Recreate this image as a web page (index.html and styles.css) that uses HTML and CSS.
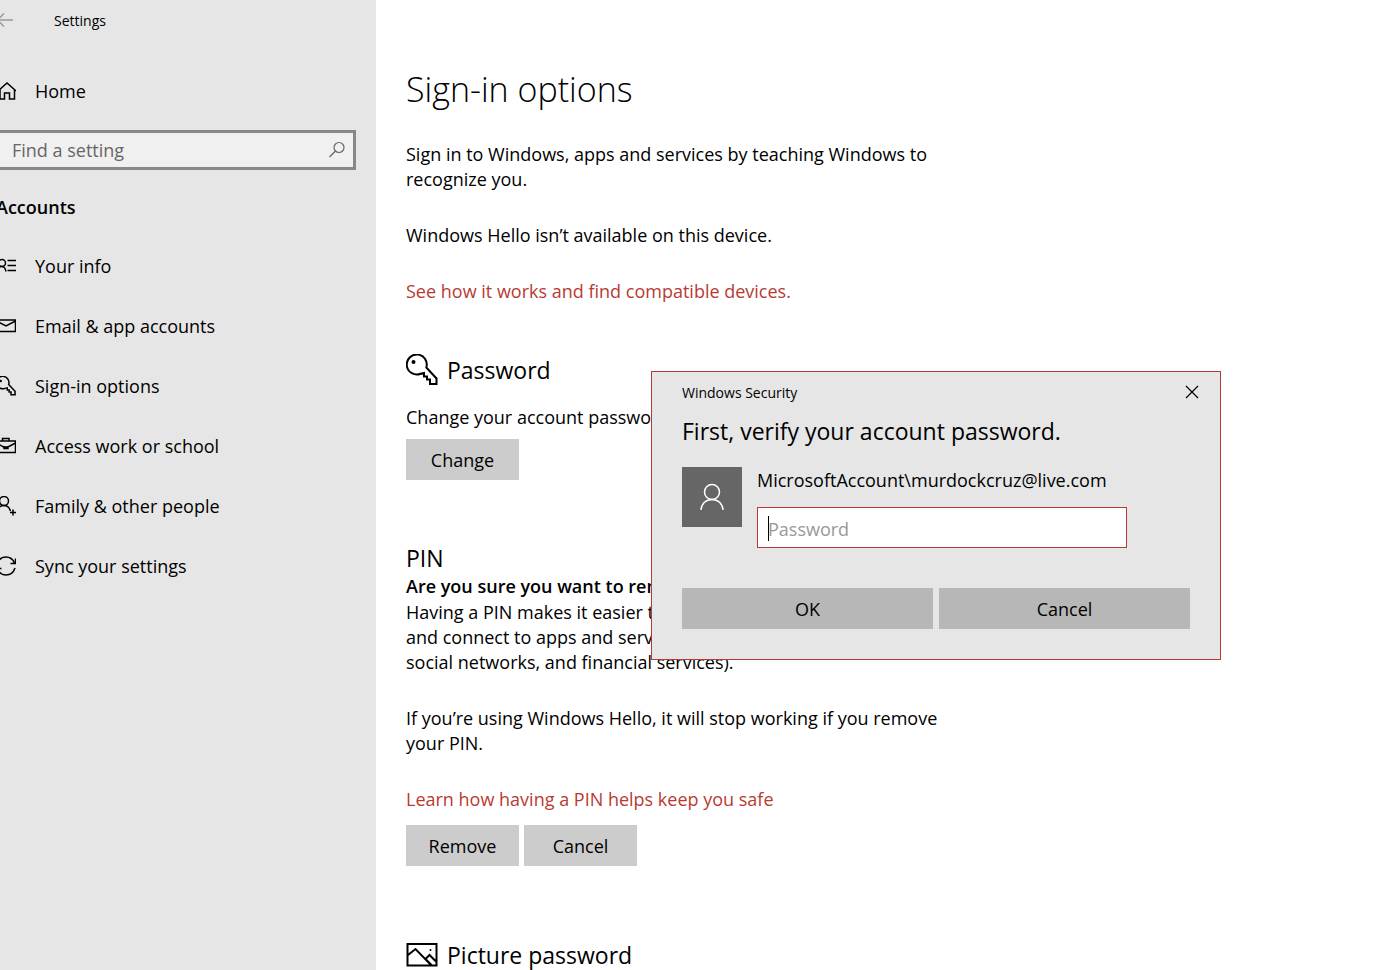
FILE: index.html
```html
<!DOCTYPE html>
<html lang="en">

<head>
    <meta charset="utf-8">
    <title>Settings</title>
    <link rel="stylesheet" href="styles.css">
</head>

<body>
    <div class="window">
        <aside class="sidebar">
            <div class="titlebar">
                <button class="back" aria-label="Back">
                    <svg class="icon" viewBox="0 0 20 20"><path d="M17 10H1.500M8 3.500L1.500 10L8 16.500" /></svg>
                </button>
                <span>Settings</span>
            </div>

            <a class="nav-link home" href="#">
                <svg class="icon" viewBox="0 0 20 20"><path d="M2 10L11 2L20 10M4 8.500V18H8.500V12H13.500V18H18.500V8.500" /></svg>
                Home
            </a>

            <div class="search">
                <input type="text" placeholder="Find a setting" aria-label="Find a setting">
                <svg class="search-icon" viewBox="0 0 18 18"><circle cx="11" cy="6.500" r="5" /><path d="M7.500 10L1.500 16" /></svg>
            </div>

            <h2 class="nav-title">Accounts</h2>

            <nav>
                <a class="nav-link" href="#">
                    <svg class="icon" viewBox="0 0 20 20"><circle cx="6" cy="7" r="3.500" /><path d="M0.500 15.500C1 12 3 10.500 6 10.500C8 10.500 9.500 13 10 15.500M11.500 4.500H20M11.500 9.500H20M11.500 14.500H20" /></svg>
                    Your info
                </a>
                <a class="nav-link" href="#">
                    <svg class="icon" viewBox="0 0 20 20"><path d="M0.500 4H19.500V15.500H0.500ZM0.500 5L10 10L19.500 5" /></svg>
                    Email &amp; app accounts
                </a>
                <a class="nav-link" href="#">
                    <svg class="icon" viewBox="0 0 32 32"><path class="key" d="M20.300 13.500A10 10 0 1 0 14.500 19.800L18 19V22.500H21V25.500H24V30H30.500V24.500Z" /><circle class="dot" cx="7.500" cy="8" r="2" /></svg>
                    Sign-in options
                </a>
                <a class="nav-link" href="#">
                    <svg class="icon" viewBox="0 0 20 20"><path d="M0.500 5H19.500V16.500H0.500ZM6.500 5V2.500H13V5M0.500 7L7.500 11H12L19.500 7M8 10V12.500H12V10" /></svg>
                    Access work or school
                </a>
                <a class="nav-link" href="#">
                    <svg class="icon" viewBox="0 0 20 20"><circle cx="8" cy="5" r="4.500" /><path d="M1 17C1.500 12 4 9.500 8 9.500C11 9.500 13.500 12 14.500 15M17 13.500V19.500M14 16.500H20" /></svg>
                    Family &amp; other people
                </a>
                <a class="nav-link" href="#">
                    <svg class="icon" viewBox="0 0 20 20"><path d="M1 8C2.500 3.500 6 1 10 1C14 1 17 3.500 18.500 7M19.500 2.500V7.500H14.500M19 12C17.500 16.500 14 19 10 19C6 19 3 16.500 1.500 13M0.500 17.500V12.500H5.500" /></svg>
                    Sync your settings
                </a>
            </nav>
        </aside>

        <main class="content">
            <h1>Sign-in options</h1>
            <p>Sign in to Windows, apps and services by teaching Windows to recognize you.</p>
            <p>Windows Hello isn’t available on this device.</p>
            <p><a href="#">See how it works and find compatible devices.</a></p>

            <section class="password">
                <h2>
                    <svg class="heading-icon" viewBox="0 0 32 32"><path class="key" d="M20.300 13.500A10 10 0 1 0 14.500 19.800L18 19V22.500H21V25.500H24V30H30.500V24.500Z" /><circle class="dot" cx="7.500" cy="8" r="2" /></svg>
                    Password
                </h2>
                <p>Change your account password</p>
                <button class="btn">Change</button>
            </section>

            <section class="pin">
                <h2>PIN</h2>
                <h3>Are you sure you want to remove your PIN?</h3>
                <p>Having a PIN makes it easier to sign in<br>and connect to apps and services (like email,<br>social networks, and financial services).</p>
                <p>If you’re using Windows Hello, it will stop working if you remove your PIN.</p>
                <p><a href="#">Learn how having a PIN helps keep you safe</a></p>
                <div class="buttons">
                    <button class="btn">Remove</button>
                    <button class="btn">Cancel</button>
                </div>
            </section>

            <section class="picture">
                <h2>
                    <svg class="heading-icon" viewBox="0 0 32 32"><path d="M1.500 5H30.500V26.500H1.500ZM2 16L9.500 10L25 26M19.500 20L23.500 16L30 22.500M20 20.500L25.500 26" /><circle class="dot" cx="24.500" cy="11" r="1" /></svg>
                    Picture password
                </h2>
            </section>
        </main>
    </div>

    <form class="dialog" role="dialog" aria-labelledby="dialog-title">
        <div class="dialog-bar">
            <span>Windows Security</span>
            <button class="close" type="button" aria-label="Close">
                <svg viewBox="0 0 14 14"><path d="M1 1L13 13M13 1L1 13" /></svg>
            </button>
        </div>
        <h2 id="dialog-title">First, verify your account password.</h2>
        <div class="account">
            <div class="avatar">
                <svg viewBox="0 0 24 28"><circle cx="12" cy="9" r="7.500" /><path d="M1 27C1.500 20.500 6 16.500 12 16.500C18 16.500 22.500 20.500 23 27" /></svg>
            </div>
            <div class="credentials">
                <label for="password">MicrosoftAccount\murdockcruz@live.com</label>
                <div class="field">
                    <input id="password" type="password" placeholder="Password">
                    <span class="caret"></span>
                </div>
            </div>
        </div>
        <div class="actions">
            <button type="button">OK</button>
            <button type="button">Cancel</button>
        </div>
    </form>
</body>

</html>
```

FILE: styles.css
```css
* {
    margin: 0;
    padding: 0;
    box-sizing: border-box;
}

body {
    font-family: "Segoe UI", "Open Sans", "Noto Sans", sans-serif;
    font-size: 18px;
    line-height: 25px;
    color: #000;
    background-color: #fff;
    overflow: hidden;
}

button,
input {
    font: inherit;
    color: inherit;
    border: none;
    border-radius: 0;
    outline: none;
}

a {
    color: #b93a32;
    text-decoration: none;
}

svg {
    flex: none;
    fill: none;
    stroke: #000;
    stroke-width: 1.5;
}

svg .dot {
    fill: #000;
    stroke: none;
}

/* the window sits a little past the left edge of the screen */
.window {
    display: flex;
    min-height: 100vh;
    margin-left: -24px;
}

/* sidebar */
.sidebar {
    flex: none;
    width: 400px;
    padding: 0 20px;
    background-color: #e6e6e6;
}

.titlebar {
    display: flex;
    align-items: center;
    gap: 38px;
    height: 40px;
    font-size: 14px;
}

.back {
    display: flex;
    background: none;
}

.back svg {
    stroke: #999;
}

.icon {
    width: 20px;
    height: 20px;
}

.icon .key {
    stroke-width: 2.4;
}

.nav-link {
    display: flex;
    align-items: center;
    gap: 19px;
    height: 60px;
    color: #000;
}

.home {
    margin-top: 21px;
}

.search {
    display: flex;
    align-items: center;
    height: 40px;
    margin-top: 9px;
    padding: 0 7px 0 13px;
    border: 3px solid #888;
    background-color: #f0f0f0;
}

.search input {
    flex: 1;
    min-width: 0;
    background: none;
}

.search input::placeholder {
    color: #666;
    opacity: 1;
}

.search-icon {
    width: 18px;
    height: 18px;
    stroke: #666;
    stroke-width: 1.2;
}

.nav-title {
    margin: 25px 0 16px;
    font-size: 18px;
    font-weight: 600;
    line-height: 25px;
}

/* content */
.content {
    flex: 1;
    padding: 66px 30px 0;
}

.content p {
    max-width: 540px;
}

.content p + p {
    margin-top: 31px;
}

h1 {
    margin-bottom: 30px;
    font-size: 34px;
    font-weight: 300;
    line-height: 46px;
}

h2 {
    font-size: 23px;
    font-weight: 400;
    line-height: 32px;
}

h3 {
    font-size: 18px;
    font-weight: 600;
}

.content h2 {
    display: flex;
    align-items: center;
    gap: 9px;
}

.heading-icon {
    width: 32px;
    height: 32px;
    stroke-width: 2;
}

.btn {
    min-width: 113px;
    height: 41px;
    padding-top: 2px;
    background-color: #ccc;
}

.password {
    margin-top: 50px;
}

.password p {
    margin-top: 19px;
    margin-bottom: 9px;
}

.pin {
    margin-top: 62px;
}

.pin h3 {
    margin-bottom: 1px;
}

.buttons {
    display: flex;
    gap: 5px;
    margin-top: 13px;
}

.picture {
    margin-top: 73px;
}

/* security dialog */
.dialog {
    position: absolute;
    top: 371px;
    left: 651px;
    width: 570px;
    padding: 0 30px 30px;
    border: 1px solid #b93a32;
    background-color: #e6e6e6;
}

.dialog h2 {
    margin-top: 3px;
}

.dialog-bar {
    display: flex;
    align-items: center;
    justify-content: space-between;
    height: 40px;
    font-size: 14px;
}

.close {
    display: flex;
    padding: 8px;
    margin-right: -17px;
    background: none;
}

.close svg {
    width: 14px;
    height: 14px;
    stroke-width: 1.2;
}

.account {
    display: flex;
    gap: 15px;
    margin-top: 20px;
}

.avatar {
    display: flex;
    align-items: center;
    justify-content: center;
    width: 60px;
    height: 60px;
    background-color: #666;
}

.avatar svg {
    width: 24px;
    height: 28px;
    stroke: #fff;
}

.credentials {
    width: 370px;
}

.credentials label {
    display: block;
    padding-top: 1px;
}

.field {
    position: relative;
    margin-top: 14px;
}

.field input {
    display: block;
    width: 100%;
    height: 41px;
    padding: 2px 10px 0;
    border: 1px solid #b93a32;
    background-color: #fff;
}

.field input::placeholder {
    color: #999;
    opacity: 1;
}

.caret {
    position: absolute;
    top: 9px;
    left: 11px;
    width: 1px;
    height: 25px;
    background-color: #000;
}

.actions {
    display: flex;
    gap: 6px;
    margin-top: 40px;
}

.actions button {
    flex: 1;
    height: 41px;
    padding-top: 2px;
    background-color: #b7b7b7;
}
```
